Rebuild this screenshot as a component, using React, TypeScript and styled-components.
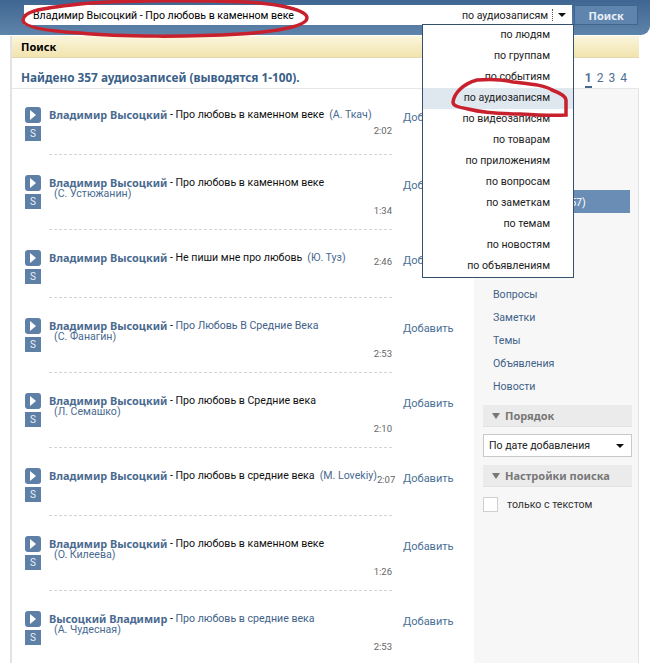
import React from 'react'
import styled, { createGlobalStyle } from 'styled-components'

const Global = createGlobalStyle`
  html, body {
    margin: 0;
    padding: 0;
    background: #fff;
    height: 663px;
    overflow: hidden;
  }
  body {
    font-family: Roboto, 'Noto Sans', sans-serif;
    font-size: 10.6px;
    color: #000;
  }
  b, h2, strong {
    font-family: 'Noto Sans', 'DejaVu Sans', sans-serif;
  }
`

const Page = styled.div`
  position: relative;
  width: 657px;
  height: 663px;
  overflow: hidden;
`

const Header = styled.header`
  display: flex;
  gap: 2px;
  width: 650px;
  height: 35px;
  box-sizing: border-box;
  padding: 5px 12px 0 24px;
  background: linear-gradient(#3f6692, #5f84aa);
  border-bottom-right-radius: 9px;
`

const SearchBox = styled.div`
  position: relative;
  display: flex;
  align-items: center;
  width: 550px;
  height: 20px;
  box-sizing: border-box;
  padding-left: 9px;
  background: #fff;
`

const SearchText = styled.span`
  flex: 1;
`

const SearchScope = styled.span`
  color: #222;
  margin-right: 4px;
`

const ScopeDivider = styled.span`
  height: 12px;
  border-left: 1px dotted #555;
  margin-right: 5px;
`

const Caret = styled.span`
  width: 0;
  height: 0;
  margin-right: 6px;
  border-left: 4px solid transparent;
  border-right: 4px solid transparent;
  border-top: 4px solid #111;
`

const SearchButton = styled.button`
  width: 64px;
  height: 20px;
  padding: 0;
  border: 1px solid #3f6690;
  background: #5f85ae;
  color: #e8eff6;
  font: bold 11px 'Noto Sans', sans-serif;
`

const Dropdown = styled.ul`
  position: absolute;
  z-index: 3;
  top: 19px;
  left: 398px;
  width: 152px;
  box-sizing: border-box;
  margin: 0;
  padding: 0;
  list-style: none;
  background: #fff;
  border: 1px solid #34506e;
`

const DropdownItem = styled.li<{ $active?: boolean }>`
  height: 21px;
  line-height: 19px;
  padding-right: 23px;
  text-align: right;
  color: #222;
  background: ${(p) => (p.$active ? '#dfe7ef' : 'transparent')};
`

const Main = styled.main`
  margin: 1px 0 0 10px;
  width: 629px;
  border-left: 2px solid #e2e2e2;
  box-sizing: border-box;
`

const TitleBar = styled.div`
  height: 22px;
  line-height: 21px;
  padding-left: 9px;
  font-family: 'Noto Sans', sans-serif;
  font-size: 11px;
  font-weight: bold;
  background: linear-gradient(#fbf5dc, #f1e4ae);
  border-bottom: 1px solid #e2d9b0;
  box-sizing: border-box;
`

const Summary = styled.div`
  display: flex;
  justify-content: space-between;
  align-items: flex-end;
  height: 31px;
  box-sizing: border-box;
  padding: 0 12px 0 9px;
  border-bottom: 1px solid #e6e6e6;
`

const SummaryText = styled.h2`
  margin: 0 0 3px;
  font-size: 11.8px;
  font-weight: bold;
  color: #3a6088;
`

const Pager = styled.div`
  display: flex;
  gap: 5px;
  font-size: 12px;
  color: #4b6f95;
`

const PageNum = styled.span<{ $current?: boolean }>`
  padding-bottom: 1px;
  font-weight: ${(p) => (p.$current ? 'bold' : 'normal')};
  border-bottom: 2px solid ${(p) => (p.$current ? '#45688e' : 'transparent')};
`

const Columns = styled.div`
  display: flex;
`

const List = styled.section`
  width: 462px;
  box-sizing: border-box;
  padding: 18px 0 0 13px;
`

const Row = styled.article`
  display: flex;
  margin-bottom: 20px;
`

const Controls = styled.div`
  display: flex;
  flex-direction: column;
  gap: 3px;
  width: 16px;
  margin-right: 8px;
`

const PlayButton = styled.span`
  display: flex;
  align-items: center;
  justify-content: center;
  height: 16px;
  border-radius: 3px;
  background: #5e7fa6;
`

const SaveButton = styled.span`
  height: 15px;
  line-height: 15px;
  text-align: center;
  font-size: 10px;
  color: #e9eff5;
  background: #5e7fa6;
`

const TrackBody = styled.div<{ $tall?: boolean }>`
  width: 343px;
  height: ${(p) => (p.$tall ? 54 : 47)}px;
  border-bottom: 1px dashed #d4d4d4;
`

const TitleLine = styled.div`
  display: flex;
  align-items: flex-start;
  height: 14px;
  line-height: 16px;

  & > * {
    flex: none;
  }
`

const Performer = styled.b`
  font-size: 10.9px;
  color: #4a6a90;
  white-space: pre;
`

const Dash = styled.span`
  white-space: pre;
`

const SongTitle = styled.span<{ $linked?: boolean }>`
  color: ${(p) => (p.$linked ? '#3f6288' : '#111')};
  white-space: pre;
`

const Artist = styled.span`
  color: #486a90;
  margin-left: 5px;
  white-space: pre;
`

const ArtistLine = styled.div`
  height: 12px;
  line-height: 10px;
  color: #486a90;
  padding-left: 5px;
`

const Duration = styled.div<{ $inline?: boolean }>`
  margin: ${(p) => (p.$inline ? '5px 0 0 auto' : '3px 0 0')};
  text-align: right;
  font-size: 9.5px;
  line-height: 14px;
  color: #666;
`

const AddLink = styled.a`
  margin: 4px 0 0 11px;
  color: #4a6f96;
  font-size: 11px;
  line-height: 14px;
`

const Sidebar = styled.aside`
  width: 165px;
  box-sizing: border-box;
  height: 580px;
  padding: 9px 6px 0 9px;
  background: #f7f7f7;
  border-right: 1px solid #dfe4ea;
`

const NavItem = styled.div<{ $active?: boolean }>`
  height: 23px;
  line-height: 25px;
  margin-right: 2px;
  padding-left: 10px;
  box-sizing: border-box;
  color: ${(p) => (p.$active ? '#fff' : '#3f6288')};
  background: ${(p) => (p.$active ? '#6a8db5' : 'transparent')};
`

const FilterHead = styled.div`
  display: flex;
  align-items: center;
  gap: 5px;
  height: 22px;
  margin-top: 8px;
  padding-left: 9px;
  font-family: 'Noto Sans', sans-serif;
  font-size: 11px;
  font-weight: bold;
  color: #777;
  background: #ebebeb;
  border-bottom: 1px solid #e2e2e2;
  box-sizing: border-box;

  &::before {
    content: '';
    border-left: 4px solid transparent;
    border-right: 4px solid transparent;
    border-top: 6px solid #777;
  }
`

const SelectBox = styled.div`
  display: flex;
  justify-content: space-between;
  align-items: center;
  height: 23px;
  margin-top: 7px;
  box-sizing: border-box;
  padding: 0 5px;
  background: #fff;
  border: 1px solid #c9c9c9;
  color: #222;
`

const SelectCaret = styled(Caret)`
  margin-right: 2px;
`

const CheckRow = styled.label`
  display: flex;
  align-items: center;
  gap: 9px;
  margin-top: 10px;
  color: #333;
`

const CheckBox = styled.span`
  width: 13px;
  height: 13px;
  background: #fff;
  border: 1px solid #cfcfcf;
`

const Scribble = styled.svg`
  position: absolute;
  z-index: 5;
  top: 0;
  left: 0;
  pointer-events: none;
`

type Track = {
  performer: string
  title: string
  linked?: boolean
  artist: string
  inlineArtist?: boolean
  time: string
  inlineTime?: boolean
}

const tracks: Track[] = [
  { performer: 'Владимир Высоцкий', title: 'Про любовь в каменном веке', artist: '(А. Ткач)', inlineArtist: true, time: '2:02' },
  { performer: 'Владимир Высоцкий', title: 'Про любовь в каменном веке', artist: '(С. Устюжанин)', time: '1:34' },
  { performer: 'Владимир Высоцкий', title: 'Не пиши мне про любовь', artist: '(Ю. Туз)', inlineArtist: true, time: '2:46', inlineTime: true },
  { performer: 'Владимир Высоцкий', title: 'Про Любовь В Средние Века', linked: true, artist: '(С. Фанагин)', time: '2:53' },
  { performer: 'Владимир Высоцкий', title: 'Про любовь в Средние века', artist: '(Л. Семашко)', time: '2:10' },
  { performer: 'Владимир Высоцкий', title: 'Про любовь в средние века', artist: '(M. Lovekiy)', inlineArtist: true, time: '2:07', inlineTime: true },
  { performer: 'Владимир Высоцкий', title: 'Про любовь в каменном веке', artist: '(О. Килеева)', time: '1:26' },
  { performer: 'Высоцкий Владимир', title: 'Про любовь в средние века', linked: true, artist: '(А. Чудесная)', time: '2:53' },
]

const scopes = [
  'по людям',
  'по группам',
  'по событиям',
  'по аудиозаписям',
  'по видеозаписям',
  'по товарам',
  'по приложениям',
  'по вопросам',
  'по заметкам',
  'по темам',
  'по новостям',
  'по объявлениям',
]

const navItems = [
  'Все',
  'Люди',
  'Группы',
  'События',
  'Аудиозаписи (357)',
  'Видеозаписи',
  'Товары',
  'Приложения',
  'Вопросы',
  'Заметки',
  'Темы',
  'Объявления',
  'Новости',
]

const TrackRow = ({ track }: { track: Track }) => (
  <Row>
    <Controls>
      <PlayButton>
        <svg width="8" height="10" viewBox="0 0 8 10">
          <path d="M1 0 L7 5 L1 10 Z" fill="#fff" />
        </svg>
      </PlayButton>
      <SaveButton>S</SaveButton>
    </Controls>
    <TrackBody $tall={!track.inlineArtist}>
      <TitleLine>
        <Performer>{track.performer}</Performer>
        <Dash> - </Dash>
        <SongTitle $linked={track.linked}>{track.title}</SongTitle>
        {track.inlineArtist && <Artist>{track.artist}</Artist>}
        {track.inlineTime && <Duration $inline>{track.time}</Duration>}
      </TitleLine>
      {!track.inlineArtist && <ArtistLine>{track.artist}</ArtistLine>}
      {!track.inlineTime && <Duration>{track.time}</Duration>}
    </TrackBody>
    <AddLink>Добавить</AddLink>
  </Row>
)

export default function App() {
  return (
    <Page>
      <Global />
      <Header>
        <SearchBox>
          <SearchText>Владимир Высоцкий - Про любовь в каменном веке</SearchText>
          <SearchScope>по аудиозаписям</SearchScope>
          <ScopeDivider />
          <Caret />
          <Dropdown>
            {scopes.map((s) => (
              <DropdownItem key={s} $active={s === 'по аудиозаписям'}>
                {s}
              </DropdownItem>
            ))}
          </Dropdown>
        </SearchBox>
        <SearchButton>Поиск</SearchButton>
      </Header>
      <Main>
        <TitleBar>Поиск</TitleBar>
        <Summary>
          <SummaryText>Найдено 357 аудиозаписей (выводятся 1-100).</SummaryText>
          <Pager>
            <PageNum $current>1</PageNum>
            <PageNum>2</PageNum>
            <PageNum>3</PageNum>
            <PageNum>4</PageNum>
          </Pager>
        </Summary>
        <Columns>
          <List>
            {tracks.map((t, i) => (
              <TrackRow key={i} track={t} />
            ))}
          </List>
          <Sidebar>
            {navItems.map((n) => (
              <NavItem key={n} $active={n.startsWith('Аудио')}>
                {n}
              </NavItem>
            ))}
            <FilterHead>Порядок</FilterHead>
            <SelectBox>
              По дате добавления
              <SelectCaret />
            </SelectBox>
            <FilterHead>Настройки поиска</FilterHead>
            <CheckRow>
              <CheckBox />
              только с текстом
            </CheckRow>
          </Sidebar>
        </Columns>
      </Main>
      <Scribble width="657" height="130" viewBox="0 0 657 130" fill="none" stroke="#c8202c" strokeWidth="3.5">
        <path d="M23 20 C24 12 34 9 80 4 C120 0 200 0 245 2 C280 4 307 10 307 18 C307 25 285 31 240 34 C190 37 120 37 80 33 C45 31 23 27 23 20 Z" />
        <path d="M453 102 C454 94 462 84 477 80 C490 79 505 80 513 82 C530 84 545 85 552 90 C560 93 566 96 566 100 L566 115 C550 116 535 115 520 114 C500 114 480 112 468 109 C458 107 453 106 453 102 Z" />
      </Scribble>
    </Page>
  )
}
